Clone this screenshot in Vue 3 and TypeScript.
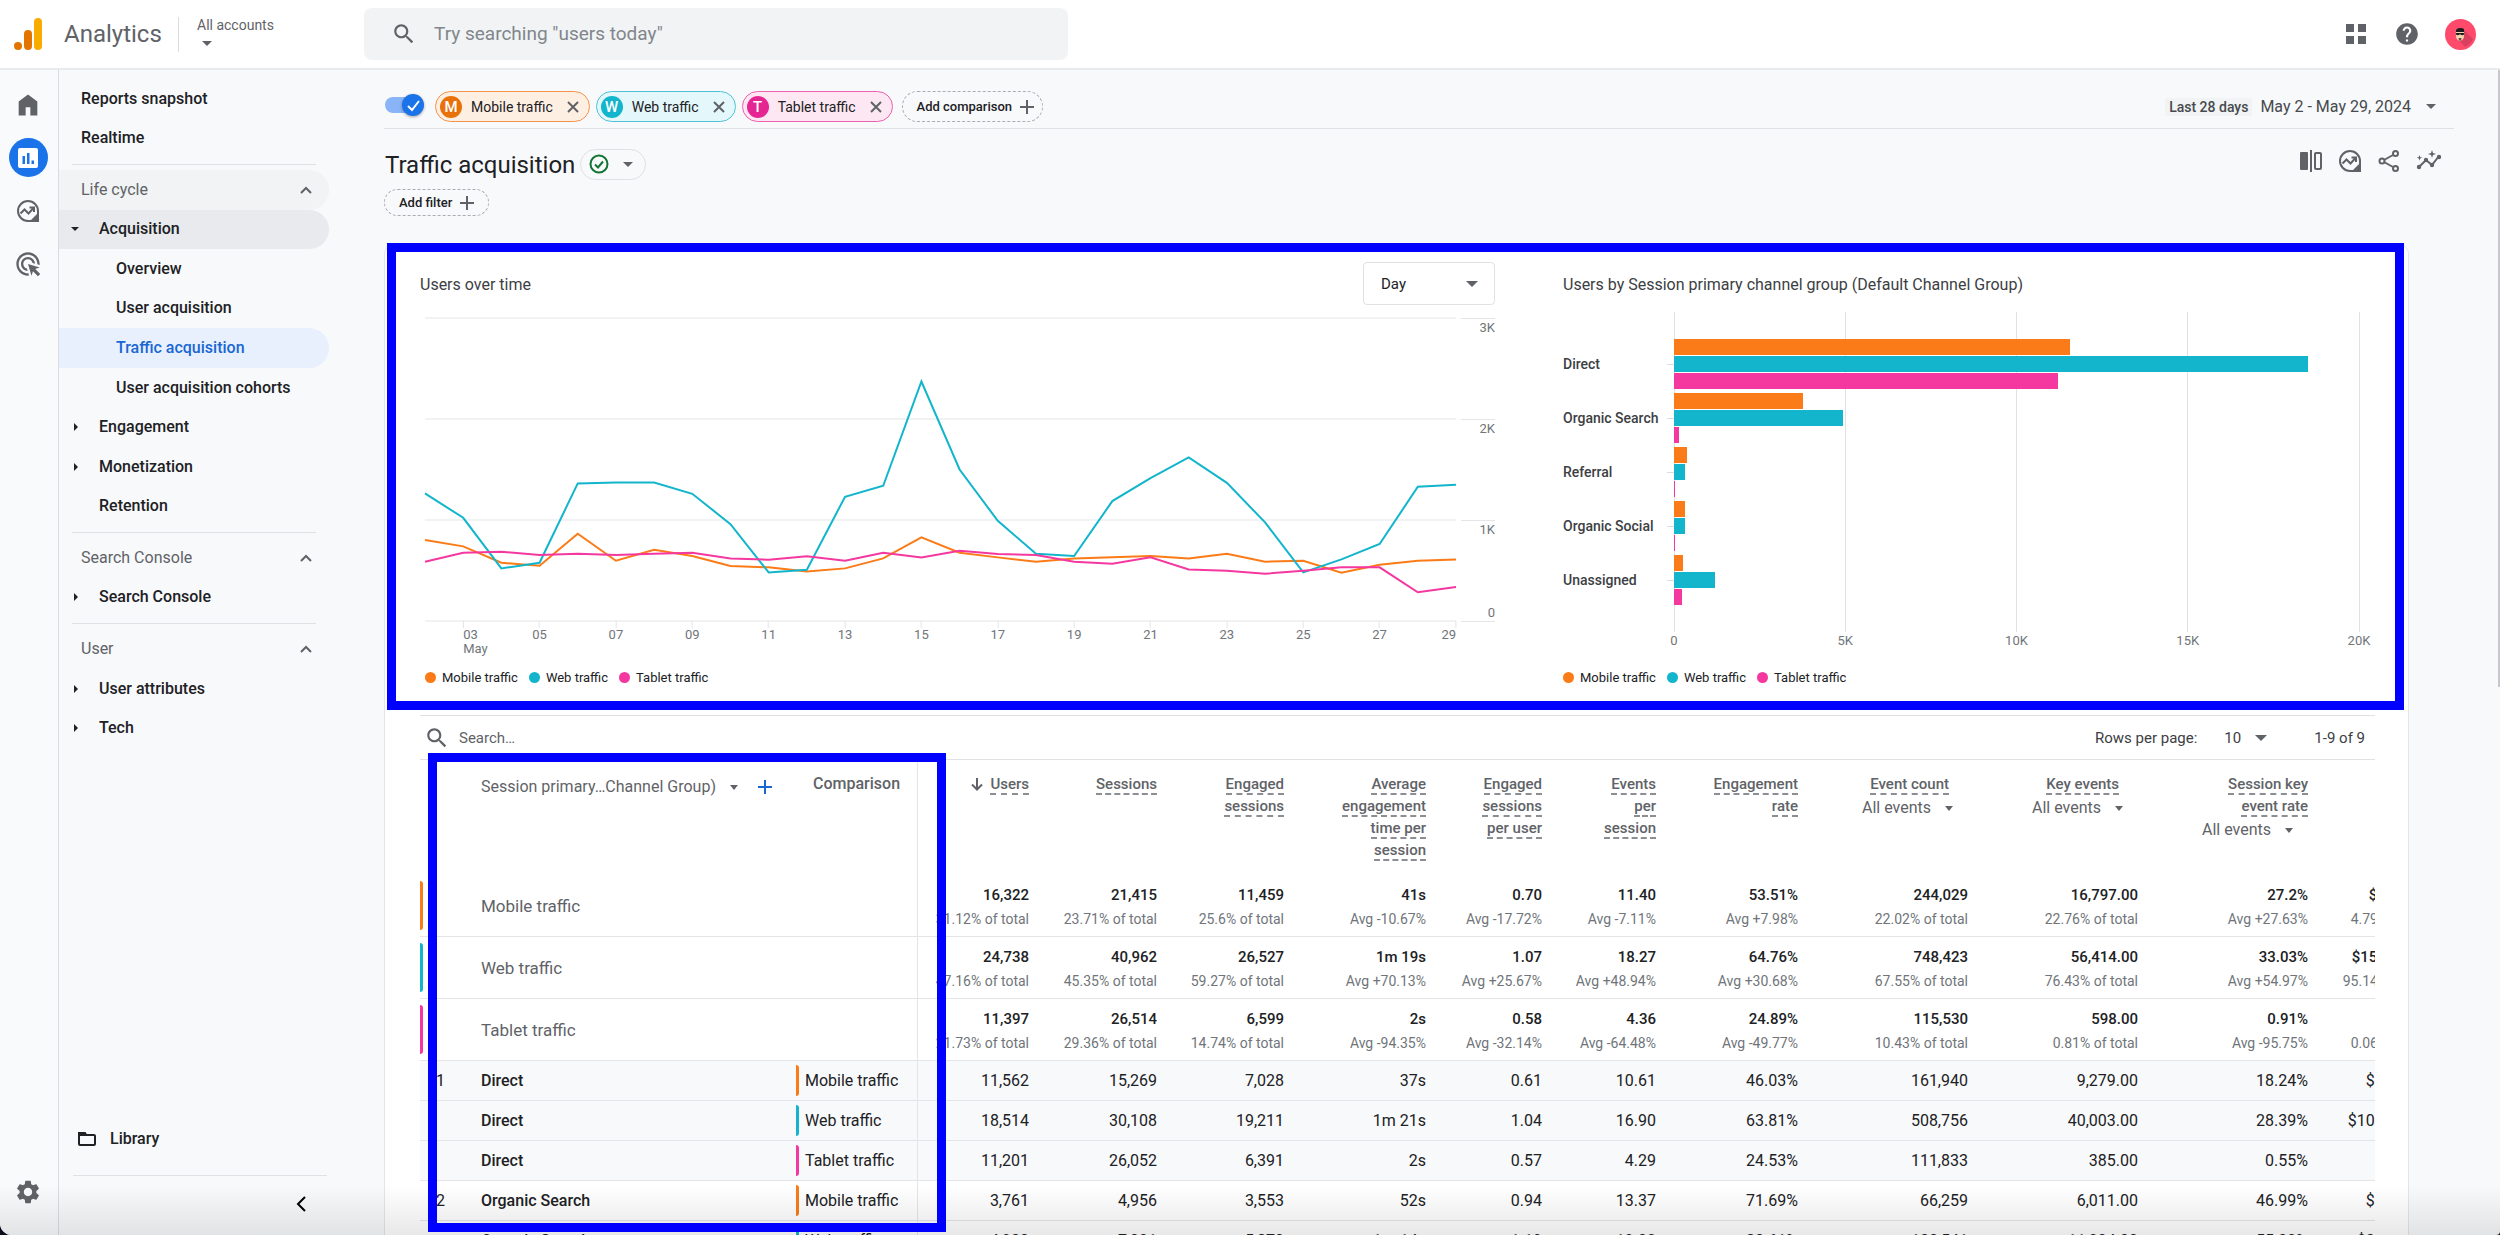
<script setup lang="ts">
import { ref } from 'vue'

type SegmentKey = 'mobile' | 'web' | 'tablet'

interface Segment {
  key: SegmentKey
  letter: string
  label: string
}

interface NavItem {
  label: string
  kind: 'top' | 'section' | 'group' | 'leaf' | 'plain'
  state?: 'open' | 'active'
}

interface Metric {
  lines: string[]
  filter?: boolean
  sorted?: boolean
}

const segments: Segment[] = [
  { key: 'mobile', letter: 'M', label: 'Mobile traffic' },
  { key: 'web', letter: 'W', label: 'Web traffic' },
  { key: 'tablet', letter: 'T', label: 'Tablet traffic' },
]

const navBlocks: NavItem[][] = [
  [
    { label: 'Reports snapshot', kind: 'top' },
    { label: 'Realtime', kind: 'top' },
  ],
  [
    { label: 'Life cycle', kind: 'section', state: 'open' },
    { label: 'Acquisition', kind: 'group', state: 'open' },
    { label: 'Overview', kind: 'leaf' },
    { label: 'User acquisition', kind: 'leaf' },
    { label: 'Traffic acquisition', kind: 'leaf', state: 'active' },
    { label: 'User acquisition cohorts', kind: 'leaf' },
    { label: 'Engagement', kind: 'group' },
    { label: 'Monetization', kind: 'group' },
    { label: 'Retention', kind: 'plain' },
  ],
  [
    { label: 'Search Console', kind: 'section' },
    { label: 'Search Console', kind: 'group' },
  ],
  [
    { label: 'User', kind: 'section' },
    { label: 'User attributes', kind: 'group' },
    { label: 'Tech', kind: 'group' },
  ],
]

const comparisonsOn = ref(true)
const granularity = ref('Day')
const rowsPerPage = ref('10')

const daily: Record<SegmentKey, number[]> = {
  mobile: [801, 739, 577, 547, 864, 597, 706, 643, 544, 531, 491, 521, 620, 828, 676, 630, 587, 620, 630, 643, 620, 666, 587, 597, 478, 557, 597, 610],
  web: [1263, 1022, 521, 577, 1362, 1372, 1372, 1259, 959, 481, 508, 1230, 1339, 2371, 1500, 992, 666, 643, 1187, 1414, 1619, 1368, 976, 481, 610, 762, 1329, 1349],
  tablet: [587, 676, 686, 653, 666, 653, 666, 676, 620, 607, 640, 597, 676, 630, 696, 663, 653, 587, 567, 630, 511, 498, 468, 498, 531, 531, 284, 336],
}
const points = (key: SegmentKey): string =>
  daily[key].map((v, i) => `${i},${3000 - v}`).join(' ')

const dayTicks = Array.from({ length: 14 }, (_, i) => ({
  index: i * 2 + 1,
  label: String(i * 2 + 3).padStart(2, '0'),
}))
const yTicks = ['3K', '2K', '1K']

const channelMax = 20000
const channels = [
  { name: 'Direct', values: [11562, 18514, 11201] },
  { name: 'Organic Search', values: [3761, 4930, 140] },
  { name: 'Referral', values: [380, 330, 20] },
  { name: 'Organic Social', values: [320, 320, 20] },
  { name: 'Unassigned', values: [250, 1210, 235] },
]
const channelTicks = [
  { at: 0, label: '0' },
  { at: 25, label: '5K' },
  { at: 50, label: '10K' },
  { at: 75, label: '15K' },
  { at: 100, label: '20K' },
]

const metrics: Metric[] = [
  { lines: ['Users'], sorted: true },
  { lines: ['Sessions'] },
  { lines: ['Engaged', 'sessions'] },
  { lines: ['Average', 'engagement', 'time per', 'session'] },
  { lines: ['Engaged', 'sessions', 'per user'] },
  { lines: ['Events', 'per', 'session'] },
  { lines: ['Engagement', 'rate'] },
  { lines: ['Event count'], filter: true },
  { lines: ['Key events'], filter: true },
  { lines: ['Session key', 'event rate'], filter: true },
]

const totals: { segment: Segment; cells: [string, string][] }[] = [
  {
    segment: segments[0],
    cells: [
      ['16,322', '31.12% of total'], ['21,415', '23.71% of total'], ['11,459', '25.6% of total'],
      ['41s', 'Avg -10.67%'], ['0.70', 'Avg -17.72%'], ['11.40', 'Avg -7.11%'], ['53.51%', 'Avg +7.98%'],
      ['244,029', '22.02% of total'], ['16,797.00', '22.76% of total'], ['27.2%', 'Avg +27.63%'],
      ['$7,664.20', '4.79% of total'],
    ],
  },
  {
    segment: segments[1],
    cells: [
      ['24,738', '47.16% of total'], ['40,962', '45.35% of total'], ['26,527', '59.27% of total'],
      ['1m 19s', 'Avg +70.13%'], ['1.07', 'Avg +25.67%'], ['18.27', 'Avg +48.94%'], ['64.76%', 'Avg +30.68%'],
      ['748,423', '67.55% of total'], ['56,414.00', '76.43% of total'], ['33.03%', 'Avg +54.97%'],
      ['$152,226.40', '95.14% of total'],
    ],
  },
  {
    segment: segments[2],
    cells: [
      ['11,397', '21.73% of total'], ['26,514', '29.36% of total'], ['6,599', '14.74% of total'],
      ['2s', 'Avg -94.35%'], ['0.58', 'Avg -32.14%'], ['4.36', 'Avg -64.48%'], ['24.89%', 'Avg -49.77%'],
      ['115,530', '10.43% of total'], ['598.00', '0.81% of total'], ['0.91%', 'Avg -95.75%'],
      ['$96.00', '0.06% of total'],
    ],
  },
]

const rows: { n: string; name: string; segment: Segment; shaded: boolean; cells: string[] }[] = [
  { n: '1', name: 'Direct', segment: segments[0], shaded: true, cells: ['11,562', '15,269', '7,028', '37s', '0.61', '10.61', '46.03%', '161,940', '9,279.00', '18.24%', '$5,120.40'] },
  { n: '', name: 'Direct', segment: segments[1], shaded: true, cells: ['18,514', '30,108', '19,211', '1m 21s', '1.04', '16.90', '63.81%', '508,756', '40,003.00', '28.39%', '$108,410.20'] },
  { n: '', name: 'Direct', segment: segments[2], shaded: true, cells: ['11,201', '26,052', '6,391', '2s', '0.57', '4.29', '24.53%', '111,833', '385.00', '0.55%', '$96.00'] },
  { n: '2', name: 'Organic Search', segment: segments[0], shaded: false, cells: ['3,761', '4,956', '3,553', '52s', '0.94', '13.37', '71.69%', '66,259', '6,011.00', '46.99%', '$2,310.10'] },
  { n: '', name: 'Organic Search', segment: segments[1], shaded: false, cells: ['4,930', '7,021', '5,870', '1m 14s', '1.19', '19.02', '83.61%', '133,541', '11,204.00', '55.02%', '$31,480.60'] },
]

const searchPath = 'M15.5 14h-.79l-.28-.27C15.41 12.59 16 11.11 16 9.5 16 5.91 13.09 3 9.5 3S3 5.91 3 9.5 5.91 16 9.5 16c1.61 0 3.09-.59 4.23-1.57l.27.28v.79l5 4.99L20.49 19l-4.99-5zm-6 0C7.01 14 5 11.99 5 9.5S7.01 5 9.5 5 14 7.01 14 9.5 11.99 14 9.5 14z'
</script>

<template>
  <div class="app">
    <header class="topbar">
      <a class="brand" href="#home" aria-label="Analytics home">
        <svg class="logo" viewBox="0 0 28 32" aria-hidden="true">
          <rect x="20" y="0" width="8" height="32" rx="4" fill="#f9ab00" />
          <rect x="10" y="12" width="8" height="20" rx="4" fill="#e37400" />
          <circle cx="4" cy="28" r="4" fill="#e37400" />
        </svg>
        <span class="brand-name">Analytics</span>
      </a>
      <button class="account" type="button">
        <span>All accounts</span>
        <span class="caret"></span>
      </button>
      <label class="searchbox">
        <svg viewBox="0 0 24 24" aria-hidden="true"><path :d="searchPath" /></svg>
        <input type="search" placeholder='Try searching "users today"' aria-label="Search analytics" />
      </label>
      <div class="top-actions">
        <button type="button" class="icon-button" aria-label="Apps">
          <svg class="s26" viewBox="0 0 26 26" fill="#474747"><path d="M3 3h8v8H3zM15 3h8v8h-8zM3 15h8v8H3zM15 15h8v8h-8z" /></svg>
        </button>
        <button type="button" class="icon-button" aria-label="Help">
          <svg class="s26" viewBox="0 0 24 24" fill="#5f6368"><path d="M12 2C6.48 2 2 6.48 2 12s4.48 10 10 10 10-4.48 10-10S17.52 2 12 2zm1 17h-2v-2h2v2zm2.07-7.75l-.9.92C13.45 12.9 13 13.5 13 15h-2v-.5c0-1.1.45-2.1 1.17-2.83l1.24-1.26c.37-.36.59-.86.59-1.41 0-1.1-.9-2-2-2s-2 .9-2 2H8c0-2.21 1.79-4 4-4s4 1.79 4 4c0 .88-.36 1.68-.93 2.25z" /></svg>
        </button>
        <button type="button" class="icon-button" aria-label="Account">
          <svg class="s31" viewBox="0 0 31 31">
            <circle cx="15.500" cy="15.500" r="15.500" fill="#ff4a6c" />
            <path d="M19 11l9 9q-3 6-8 8l-7-8z" fill="#d9405e" />
            <path d="M11 12h8v5q0 4-4 5-4-1-4-5z" fill="#f6d3b3" />
            <path d="M11 13v-2q1-2 4-2t4 1v3z" fill="#1c1c1c" />
            <path d="M11 14h8v1.500q-1 1-3 .5l-1-1-1 1q-2 .5-3-.5z" fill="#1c1c1c" />
            <path d="M13.500 19h3l-.5 2.500h-2z" fill="#6b4a3a" />
          </svg>
        </button>
      </div>
    </header>

    <div class="body">
      <nav class="rail" aria-label="Product areas">
        <button type="button" class="icon-button rail-item" aria-label="Home">
          <svg class="s28" viewBox="0 0 24 24"><path d="M4 21V9l8-6 8 6v12h-6v-7h-4v7z" /></svg>
        </button>
        <button type="button" class="icon-button rail-item rail-active" aria-label="Reports">
          <svg class="s28" viewBox="0 0 28 28"><rect x="4" y="4" width="20" height="20" rx="2" fill="#fff" /><path d="M8.500 12h2.500v8H8.500zM13 9h2.500v11H13zM17.500 16.500H20V20h-2.500z" fill="#1a73e8" /></svg>
        </button>
        <button type="button" class="icon-button rail-item" aria-label="Explore">
          <svg class="s28 line" viewBox="0 0 28 28"><path d="M14 4a10 10 0 1 0 0 20h10V14A10 10 0 0 0 14 4z" /><path d="M6.500 16.500l4-4 4 4 5-5.500M15.500 10.500h4.500v4.500" /><path d="M19 22.500l3.500-3.500v3.500z" fill="#5f6368" /></svg>
        </button>
        <button type="button" class="icon-button rail-item" aria-label="Advertising">
          <svg class="s28" viewBox="0 0 24 24"><path d="M11.710 17.990C8.530 17.840 6 15.220 6 12c0-3.310 2.690-6 6-6 3.220 0 5.840 2.530 5.990 5.710l-2.100-.630C15.480 9.310 13.890 8 12 8c-2.210 0-4 1.790-4 4 0 1.890 1.310 3.480 3.080 3.890l.630 2.100zM22 12c0 .300-.010.600-.040.900l-1.970-.590C20 12.210 20 12.100 20 12c0-4.420-3.580-8-8-8s-8 3.580-8 8 3.580 8 8 8c.100 0 .210 0 .310-.010l.590 1.970c-.300.030-.600.040-.900.040-5.520 0-10-4.480-10-10S6.480 2 12 2s10 4.480 10 10zm-3.770 4.260L22 15l-10-3 3 10 1.260-3.770 4.270 4.270 1.980-1.980-4.280-4.260z" /></svg>
        </button>
        <button type="button" class="icon-button rail-item rail-admin" aria-label="Admin">
          <svg class="s28" viewBox="0 0 24 24"><path d="M19.140 12.940c.04-.3.06-.61.06-.94 0-.32-.02-.64-.07-.94l2.030-1.580c.18-.14.23-.41.12-.61l-1.920-3.320c-.12-.22-.37-.29-.59-.22l-2.390.96c-.5-.38-1.030-.7-1.620-.94L14.400 2.810c-.04-.24-.24-.41-.48-.41h-3.840c-.24 0-.43.17-.47.41L9.250 5.350C8.660 5.590 8.120 5.920 7.630 6.290L5.240 5.330c-.22-.08-.47 0-.59.22L2.740 8.870c-.12.21-.08.47.12.61l2.030 1.580C4.840 11.360 4.800 11.690 4.800 12s.02.64.07.94l-2.030 1.580c-.18.14-.23.41-.12.61l1.920 3.320c.12.22.37.29.59.22l2.390-.96c.5.38 1.030.7 1.620.94l.36 2.540c.05.24.24.41.48.41h3.840c.24 0 .44-.17.47-.41l.36-2.540c.59-.24 1.130-.56 1.620-.94l2.390.96c.22.08.47 0 .59-.22l1.920-3.320c.12-.22.07-.47-.12-.61l-2.010-1.580zM12 15.600c-1.980 0-3.600-1.620-3.600-3.600s1.620-3.600 3.600-3.600 3.600 1.620 3.600 3.600-1.620 3.600-3.600 3.600z" /></svg>
        </button>
      </nav>

      <nav class="sidebar" aria-label="Reports">
        <template v-for="(block, b) in navBlocks" :key="b">
          <hr v-if="b > 0" class="nav-rule" />
          <ul class="nav-block" :class="`nav-block-${b}`">
            <li v-for="(item, i) in block" :key="i" :class="['nav-item', item.kind, item.state]">
              <a href="#report">
                <span v-if="item.kind === 'group'" class="nav-caret"></span>
                <span class="nav-label">{{ item.label }}</span>
                <svg v-if="item.kind === 'section'" class="nav-chevron" viewBox="0 0 12 8" aria-hidden="true"><path d="M1 7l5-5 5 5" /></svg>
              </a>
            </li>
          </ul>
        </template>
        <div class="nav-foot">
          <a class="library" href="#library">
            <svg viewBox="0 0 18 14" aria-hidden="true"><path d="M1 12V2q0-1 1-1h4l2 2h8q1 0 1 1v8q0 1-1 1H2q-1 0-1-1z" /><path d="M1 1h6l1 2H1z" fill="#202124" /></svg>
            <span>Library</span>
          </a>
          <hr />
          <button type="button" class="icon-button collapse" aria-label="Collapse navigation">
            <svg viewBox="0 0 10 16"><path d="M9 1L2 8l7 7" /></svg>
          </button>
        </div>
      </nav>

      <main class="main">
        <section class="compare-bar">
          <input v-model="comparisonsOn" class="toggle" type="checkbox" aria-label="Comparisons" />
          <ul class="chips">
            <li v-for="s in segments" :key="s.key" :class="['chip', s.key]">
              <span class="chip-letter">{{ s.letter }}</span>
              <span>{{ s.label }}</span>
              <button type="button" class="icon-button" :aria-label="`Remove ${s.label}`">
                <svg class="s12" viewBox="0 0 12 12"><path d="M1 1l10 10M11 1L1 11" /></svg>
              </button>
            </li>
          </ul>
          <button type="button" class="dashed add-comparison">
            <span>Add comparison</span>
            <svg class="s14" viewBox="0 0 14 14" aria-hidden="true"><path d="M7 0v14M0 7h14" /></svg>
          </button>
          <button type="button" class="date-range">
            <span class="preset">Last 28 days</span>
            <span>May 2 - May 29, 2024</span>
            <span class="caret"></span>
          </button>
        </section>

        <section class="title-bar">
          <h1>Traffic acquisition</h1>
          <button type="button" class="status" aria-label="Data quality">
            <svg class="s20" viewBox="0 0 20 20"><circle cx="10" cy="10" r="8.500" /><path d="M6 10.500l3 3 5-6" /></svg>
            <span class="caret"></span>
          </button>
          <div class="report-actions">
            <button type="button" class="icon-button" aria-label="Compare">
              <svg class="s24" viewBox="0 0 24 24"><rect x="1" y="3" width="8" height="18" rx="1" fill="#5f6368" /><path d="M12 1v22" class="stroke" /><rect x="16" y="4" width="6" height="16" rx="1" class="stroke" /></svg>
            </button>
            <button type="button" class="icon-button" aria-label="Explore this report">
              <svg class="s24 line" viewBox="0 0 24 24"><path d="M12 2a10 10 0 1 0 0 20h10V12A10 10 0 0 0 12 2z" /><path d="M4.500 14.500l4-4 4 4 5-5.500M13.500 8.500H18V13" /><path d="M17 20.500l3.500-3.500v3.500z" fill="#5f6368" /></svg>
            </button>
            <button type="button" class="icon-button" aria-label="Share">
              <svg class="s24 line" viewBox="0 0 24 24"><path d="M7 11l9-5M7 13l9 5" /><circle cx="5" cy="12" r="2.500" /><circle cx="18.500" cy="4.500" r="2.500" /><circle cx="18.500" cy="19.500" r="2.500" /></svg>
            </button>
            <button type="button" class="icon-button" aria-label="Insights">
              <svg class="s26" viewBox="0 0 26 24"><path d="M3 18l7-7 6 5 7-9" class="stroke" /><circle cx="3" cy="18" r="2.200" /><circle cx="10" cy="11" r="2.200" /><circle cx="16" cy="16" r="2.200" /><circle cx="23" cy="8" r="2.200" /><path d="M16 1l1 3 3 1-3 1-1 3-1-3-3-1 3-1zM3.500 6l.7 2 2 .7-2 .7-.7 2-.7-2-2-.7 2-.7z" /></svg>
            </button>
          </div>
        </section>
        <button type="button" class="dashed add-filter">
          <span>Add filter</span>
          <svg class="s14" viewBox="0 0 14 14" aria-hidden="true"><path d="M7 0v14M0 7h14" /></svg>
        </button>

        <article class="card">
          <section class="charts">
            <div class="panel">
              <div class="panel-head">
                <h2>Users over time</h2>
                <label class="select-wrap granularity">
                  <select v-model="granularity" aria-label="Granularity">
                    <option>Day</option>
                    <option>Week</option>
                    <option>Month</option>
                  </select>
                  <span class="caret big"></span>
                </label>
              </div>
              <div class="line-chart">
                <div class="line-plot">
                  <svg viewBox="0 0 27 3000" preserveAspectRatio="none" role="img" aria-label="Users over time">
                    <path class="grid" d="M0 0H27M0 1000H27M0 2000H27M0 3000H27" />
                    <polyline v-for="s in segments" :key="s.key" :class="s.key" :points="points(s.key)" />
                  </svg>
                  <div class="x-axis">
                    <span v-for="t in dayTicks" :key="t.label" class="x-tick" :style="{ left: (t.index / 27) * 100 + '%' }">
                      <span>{{ t.label }}</span>
                      <span v-if="t.label === '03'">May</span>
                    </span>
                  </div>
                </div>
                <div class="y-axis">
                  <span v-for="y in yTicks" :key="y">{{ y }}</span>
                  <span class="zero">0</span>
                </div>
              </div>
              <ul class="legend indented">
                <li v-for="s in segments" :key="s.key" :class="s.key">{{ s.label }}</li>
              </ul>
            </div>

            <div class="panel">
              <div class="panel-head">
                <h2>Users by Session primary channel group (Default Channel Group)</h2>
              </div>
              <div class="bar-chart">
                <div class="bar-grid">
                  <span v-for="t in channelTicks" :key="t.at" class="bar-tick" :style="{ left: t.at + '%' }"><span>{{ t.label }}</span></span>
                </div>
                <div v-for="c in channels" :key="c.name" class="channel">
                  <span class="channel-name">{{ c.name }}</span>
                  <span class="notch"></span>
                  <div class="bars">
                    <div v-for="(v, i) in c.values" :key="i" :class="['bar', segments[i].key]" :style="{ width: (v / channelMax) * 100 + '%' }"></div>
                  </div>
                </div>
              </div>
              <ul class="legend">
                <li v-for="s in segments" :key="s.key" :class="s.key">{{ s.label }}</li>
              </ul>
            </div>
            <div class="highlight highlight-charts"></div>
          </section>

          <section class="table-area">
            <div class="table-tools">
              <label class="table-search">
                <svg viewBox="0 0 24 24" aria-hidden="true"><path :d="searchPath" /></svg>
                <input type="text" placeholder="Search…" aria-label="Search rows" />
              </label>
              <label class="rows-label" for="rows-per-page">Rows per page:</label>
              <span class="select-wrap paging">
                <select id="rows-per-page" v-model="rowsPerPage">
                  <option>10</option>
                  <option>25</option>
                </select>
                <span class="caret big"></span>
              </span>
              <span class="range">1-9 of 9</span>
            </div>

            <div class="table-clip">
              <table>
                <colgroup>
                  <col class="c-index" />
                  <col />
                  <col class="c-comparison" />
                  <col class="c-users" />
                  <col class="c-sessions" />
                  <col class="c-engaged" />
                  <col class="c-time" />
                  <col class="c-peruser" />
                  <col class="c-events" />
                  <col class="c-rate" />
                  <col class="c-wide" />
                  <col class="c-wide" />
                  <col class="c-wide" />
                  <col class="c-revenue" />
                </colgroup>
                <thead>
                  <tr>
                    <td></td>
                    <th scope="col" class="dimension">
                      <div>
                        <button type="button">Session primary…Channel Group) <span class="caret small"></span></button>
                        <button type="button" class="icon-button plus" aria-label="Add dimension">
                          <svg class="s14" viewBox="0 0 14 14"><path d="M7 0v14M0 7h14" /></svg>
                        </button>
                      </div>
                    </th>
                    <th scope="col" class="comparison">Comparison</th>
                    <th v-for="(m, i) in metrics" :key="i" scope="col" class="metric" :class="{ inset: m.filter && m.lines.length === 1 }">
                      <div v-for="(l, j) in m.lines" :key="j" class="metric-line">
                        <svg v-if="m.sorted" class="s14 sort" viewBox="0 0 14 14" aria-hidden="true"><path d="M7 1v11M2 7.500L7 12.500l5-5" /></svg>
                        <span>{{ l }}</span>
                      </div>
                      <button v-if="m.filter" type="button">All events <span class="caret small"></span></button>
                    </th>
                    <td></td>
                  </tr>
                </thead>
                <tbody>
                  <tr v-for="t in totals" :key="t.segment.key" class="total">
                    <td><span :class="['mark', t.segment.key]"></span></td>
                    <th scope="row">{{ t.segment.label }}</th>
                    <td class="frozen"></td>
                    <td v-for="(c, i) in t.cells" :key="i" class="num">
                      <strong>{{ c[0] }}</strong>
                      <small>{{ c[1] }}</small>
                    </td>
                  </tr>
                  <tr v-for="(r, k) in rows" :key="k" :class="['data', { shaded: r.shaded }]">
                    <td class="index">{{ r.n }}</td>
                    <th scope="row">{{ r.name }}</th>
                    <td class="frozen"><div><span :class="['mark', r.segment.key]"></span>{{ r.segment.label }}</div></td>
                    <td v-for="(c, i) in r.cells" :key="i" class="num">{{ c }}</td>
                  </tr>
                </tbody>
              </table>
            </div>
            <div class="highlight highlight-table"></div>
          </section>
        </article>
        <div class="scroll-thumb"></div>
      </main>
    </div>
    <div class="bottom-fade"></div>
  </div>
</template>

<style>
body {
  margin: 0;
  background: #0b0d1c;
}
</style>

<style scoped>
.app {
  --mobile: #fa7b17;
  --web: #12b5cb;
  --tablet: #f538a0;
  --ink: #202124;
  --grey: #5f6368;
  --line: #e3e5e8;
  position: relative;
  display: flex;
  flex-direction: column;
  height: 100vh;
  overflow: hidden;
  border-radius: 0 0 4px 12px;
  background: #f8f9fb;
  color: var(--ink);
  font: 400 16px/20px Roboto, "Open Sans", sans-serif;
}
* {
  box-sizing: border-box;
}
button,
input,
select {
  font: inherit;
  color: inherit;
}
button {
  padding: 0;
  border: 0;
  background: none;
  cursor: pointer;
}
a {
  color: inherit;
  text-decoration: none;
}
ul {
  margin: 0;
  padding: 0;
  list-style: none;
}
h1,
h2 {
  margin: 0;
  font-weight: 400;
}
hr {
  margin: 0;
  border: 0;
  border-top: 1px solid #dfe1e5;
}
svg {
  display: block;
  flex: none;
  fill: var(--grey);
}
.icon-button {
  display: flex;
  align-items: center;
  justify-content: center;
}
.s12 { width: 12px; height: 12px; }
.s14 { width: 14px; height: 14px; }
.s20 { width: 20px; height: 20px; }
.s24 { width: 24px; height: 24px; }
.s26 { width: 26px; height: 26px; }
.s28 { width: 28px; height: 28px; }
.s31 { width: 31px; height: 31px; }
.line,
.stroke {
  fill: none;
  stroke: var(--grey);
  stroke-width: 2;
}
.caret {
  flex: none;
  width: 0;
  height: 0;
  border: 5px solid transparent;
  border-top-color: var(--grey);
  border-bottom: 0;
}
.caret.small {
  border-width: 4px;
  border-top-width: 5px;
  border-bottom: 0;
}
.caret.big {
  border-width: 6px;
  border-bottom: 0;
}

/* Top bar */
.topbar {
  display: flex;
  align-items: center;
  flex: none;
  height: 70px;
  padding: 0 24px 0 14px;
  border-bottom: 2px solid #e8eaed;
  background: #fff;
}
.brand {
  display: flex;
  align-items: center;
  gap: 22px;
  width: 164px;
}
.logo {
  width: 28px;
  height: 32px;
}
.brand-name {
  font-size: 24px;
  line-height: 32px;
  color: var(--grey);
}
.account {
  display: flex;
  flex-direction: column;
  align-items: flex-start;
  justify-content: flex-start;
  gap: 8px;
  width: 186px;
  height: 35px;
  padding: 0 0 0 18px;
  border-left: 1px solid #dadce0;
  font-size: 14px;
  line-height: 16px;
  color: var(--grey);
}
.account .caret {
  margin-left: 5px;
}
.searchbox {
  display: flex;
  align-items: center;
  gap: 17px;
  flex: 0 1 704px;
  height: 52px;
  padding: 0 27px;
  border-radius: 8px;
  background: #f1f3f4;
}
.searchbox svg {
  width: 26px;
  height: 26px;
}
.searchbox input {
  flex: 1;
  min-width: 0;
  padding: 0;
  border: 0;
  outline: 0;
  background: none;
  font-size: 19px;
}
.searchbox input::placeholder {
  color: #80868b;
  opacity: 1;
}
.top-actions {
  display: flex;
  align-items: center;
  gap: 25px;
  margin-left: auto;
}

/* Rail */
.body {
  display: flex;
  flex: 1;
  min-height: 0;
}
.rail {
  display: flex;
  flex-direction: column;
  align-items: center;
  flex: none;
  width: 59px;
  padding: 15px 2px 24px 0;
  border-right: 1px solid #dadce0;
  background: #f9fafc;
}
.rail-item {
  width: 39px;
  height: 39px;
  margin-bottom: 14px;
}
.rail-active {
  border-radius: 50%;
  background: #1a73e8;
}
.rail-admin {
  margin: auto 0 0;
}

/* Sidebar */
.sidebar {
  display: flex;
  flex-direction: column;
  flex: none;
  width: 325px;
  padding-top: 9px;
  font-weight: 500;
}
.nav-block {
  display: flex;
  flex-direction: column;
  margin-right: 55px;
}
.nav-block-0 { height: 79px; }
.nav-block-1 { height: 356px; }
.nav-block-2 { height: 79px; }
.nav-block-3 { height: 119px; }
.nav-item {
  display: flex;
  flex: 1;
  border-radius: 0 20px 20px 0;
}
.nav-item a {
  display: flex;
  align-items: center;
  flex: 1;
  padding: 0 17px 0 22px;
}
.nav-item.section {
  font-weight: 400;
  color: var(--grey);
}
.nav-item.section.open {
  background: #f1f3f4;
}
.nav-item.group.open {
  background: #e8eaed;
}
.nav-item.group a {
  padding-left: 14px;
}
.nav-item.plain a {
  padding-left: 40px;
}
.nav-item.leaf a {
  padding-left: 57px;
}
.nav-item.active {
  background: #e8f0fe;
  color: #1967d2;
}
.nav-caret {
  width: 26px;
}
.nav-caret::before {
  content: "";
  display: block;
  width: 0;
  margin-left: 1px;
  border: 4px solid transparent;
  border-left-color: var(--ink);
  border-right: 0;
}
.nav-item.open .nav-caret::before {
  margin-left: -2px;
  border: 4px solid transparent;
  border-top-color: var(--ink);
  border-bottom: 0;
}
.nav-chevron {
  width: 12px;
  height: 8px;
  margin-left: auto;
  fill: none;
  stroke: var(--grey);
  stroke-width: 2;
}
.nav-rule {
  margin: 6px 68px 5px 13px;
}
.nav-foot {
  margin: auto 57px 23px 14px;
}
.library {
  display: flex;
  align-items: center;
  gap: 14px;
  padding: 0 0 26px 5px;
}
.library svg {
  width: 18px;
  height: 14px;
  fill: none;
  stroke: var(--ink);
  stroke-width: 2;
}
.collapse {
  margin: 20px 21px 0 auto;
}
.collapse svg {
  width: 10px;
  height: 16px;
  fill: none;
  stroke: #000;
  stroke-width: 2;
}

/* Main column */
.main {
  position: relative;
  flex: 1;
  min-width: 0;
  padding: 0 46px 0 0;
  overflow: hidden;
}
.compare-bar {
  display: flex;
  align-items: center;
  padding: 21px 16px 6px 0;
  border-bottom: 1px solid #dfe1e5;
}
.toggle {
  appearance: none;
  display: flex;
  align-items: center;
  width: 37px;
  height: 16px;
  margin: 0 13px 3px 1px;
  border-radius: 8px;
  background: #8ab4f8;
}
.toggle::before {
  content: "";
  width: 22px;
  height: 22px;
  margin-left: 17px;
  border-radius: 50%;
  background: #1a73e8 url("data:image/svg+xml,%3Csvg xmlns='http://www.w3.org/2000/svg' viewBox='0 0 22 22'%3E%3Cpath d='M6 12l4 4 7-9' fill='none' stroke='white' stroke-width='2'/%3E%3C/svg%3E");
  box-shadow: 0 1px 3px rgba(0, 0, 0, 0.35);
  flex: none;
}
.chips {
  display: flex;
  gap: 6px;
}
.chip {
  display: flex;
  align-items: center;
  height: 31px;
  padding: 0 10px 0 4px;
  border: 1px solid;
  border-radius: 16px;
  font-size: 14px;
}
.chip.mobile { border-color: #f5924a; background: #feefe3; }
.chip.web { border-color: #4fc3d5; background: #e4f7fb; }
.chip.tablet { border-color: #ee5fb0; background: #fde7f3; }
.chip-letter {
  width: 22px;
  height: 22px;
  margin-right: 9px;
  border-radius: 50%;
  font-size: 15px;
  font-weight: 500;
  line-height: 22px;
  text-align: center;
  color: #fff;
}
.mobile .chip-letter { background: #e8710a; }
.web .chip-letter { background: #12b5cb; }
.tablet .chip-letter { background: #e52592; }
.chip .icon-button {
  margin-left: 14px;
}
.chip svg,
.dashed svg {
  stroke: var(--grey);
  stroke-width: 2;
}
.dashed {
  display: flex;
  align-items: center;
  gap: 8px;
  border: 1px dashed #a9adb2;
  border-radius: 16px;
  font-size: 13px;
  font-weight: 500;
}
.add-comparison {
  height: 31px;
  margin-left: 9px;
  padding: 0 8px 0 14px;
}
.add-filter {
  height: 27px;
  margin: 9px 0 28px;
  padding: 0 14px 0 14px;
}
.date-range {
  display: flex;
  align-items: center;
  gap: 8px;
  margin-left: auto;
  padding-right: 2px;
  color: #474a4e;
}
.date-range .caret {
  margin-left: 7px;
}
.preset {
  padding: 0 4px;
  border-radius: 2px;
  background: #f1f3f4;
  font-size: 14px;
  font-weight: 500;
  line-height: 18px;
}
.title-bar {
  display: flex;
  align-items: center;
  gap: 5px;
  padding: 19px 12px 0 0;
}
h1 {
  padding: 2px 0 0 1px;
  font-size: 24px;
  line-height: 30px;
}
.status {
  display: flex;
  align-items: center;
  gap: 14px;
  height: 31px;
  padding: 0 12px 0 8px;
  border: 1px solid #dfe1e5;
  border-radius: 16px;
}
.status svg {
  fill: none;
  stroke: #137333;
  stroke-width: 2;
}
.report-actions {
  display: flex;
  align-items: center;
  gap: 15px;
  height: 24px;
  margin: 0 0 7px auto;
}

/* Card */
.card {
  margin-right: 45px;
  border: 1px solid var(--line);
  border-radius: 10px;
  background: #fff;
}
.charts {
  position: relative;
  display: grid;
  grid-template-columns: 1075fr 812fr;
  gap: 68px;
  padding: 17px 33px 29px 35px;
}
.panel {
  min-width: 0;
}
.panel-head {
  display: flex;
  align-items: center;
  justify-content: space-between;
  height: 43px;
}
h2 {
  padding-top: 2px;
  font-size: 16px;
  line-height: 20px;
  color: #3c4043;
}
.select-wrap {
  display: flex;
  align-items: center;
}
.select-wrap select {
  appearance: none;
  padding: 0;
  border: 0;
  outline: 0;
  background: none;
  font-size: 15px;
}
.select-wrap .caret {
  pointer-events: none;
}
.granularity {
  justify-content: space-between;
  width: 132px;
  height: 43px;
  padding: 0 16px 0 17px;
  border: 1px solid #dfe1e5;
  border-radius: 4px;
}
.granularity select {
  width: 60px;
}
.line-chart {
  display: flex;
  gap: 5px;
  margin-top: 13px;
  padding-left: 5px;
  font-size: 13px;
  line-height: 15px;
  color: #70757a;
}
.line-plot {
  flex: 1;
  min-width: 0;
}
.line-plot > svg {
  width: 100%;
  height: 303px;
  overflow: visible;
}
.line-plot path,
.line-plot polyline {
  fill: none;
  vector-effect: non-scaling-stroke;
}
.grid { stroke: #e3e5e8; stroke-width: 1; }
.line-plot polyline { stroke-width: 2; }
polyline.mobile { stroke: var(--mobile); }
polyline.web { stroke: var(--web); }
polyline.tablet { stroke: var(--tablet); }
.x-axis {
  position: relative;
  height: 48px;
}
.x-tick {
  position: absolute;
  display: flex;
  flex-direction: column;
  line-height: 14px;
  transform: translateX(-50%);
}
.x-tick::before {
  content: "";
  align-self: center;
  width: 1px;
  height: 7px;
  background: var(--line);
}
.x-tick:first-child {
  transform: none;
}
.x-tick:first-child::before {
  align-self: flex-start;
}
.x-tick:last-child {
  transform: translateX(-100%);
}
.x-tick:last-child::before {
  align-self: flex-end;
}
.y-axis {
  display: flex;
  flex-direction: column;
  width: 34px;
  height: 304px;
  border-bottom: 1px solid var(--line);
  text-align: right;
}
.y-axis span {
  flex: none;
  height: 101px;
  padding-top: 1px;
  border-top: 1px solid var(--line);
}
.y-axis .zero {
  height: 0;
  margin-top: -16px;
  padding: 0;
  border: 0;
}
.legend {
  display: flex;
  gap: 11px;
  font-size: 13px;
  line-height: 17px;
}
.legend.indented {
  padding-left: 5px;
}
.legend li {
  display: flex;
  align-items: center;
  gap: 6px;
}
.legend li::before {
  content: "";
  width: 11px;
  height: 11px;
  border-radius: 50%;
  background: var(--mobile);
}
.legend li.web::before { background: var(--web); }
.legend li.tablet::before { background: var(--tablet); }
.bar-chart {
  position: relative;
  height: 320px;
  margin: 7px 0 37px;
  padding-top: 25px;
}
.bar-grid {
  position: absolute;
  inset: 0 16px 0 111px;
}
.bar-tick {
  position: absolute;
  top: 0;
  bottom: 0;
  display: flex;
  flex-direction: column;
  align-items: center;
  width: 40px;
  margin-left: -20px;
  font-size: 13px;
  line-height: 18px;
  color: #70757a;
}
.bar-tick::before {
  content: "";
  flex: none;
  width: 1px;
  height: 320px;
  background: #dfe1e5;
}
.channel {
  position: relative;
  display: flex;
  align-items: center;
  height: 54px;
  padding-right: 16px;
}
.channel-name {
  width: 104px;
  font-size: 14px;
  font-weight: 500;
  color: #3c4043;
}
.notch {
  width: 7px;
  height: 1px;
  background: #dadce0;
}
.bars {
  display: flex;
  flex-direction: column;
  gap: 1px;
  flex: 1;
}
.bar { height: 16px; }
.bar.mobile { background: var(--mobile); }
.bar.web { background: var(--web); }
.bar.tablet { background: var(--tablet); }
.highlight {
  position: absolute;
  z-index: 3;
  border: 9px solid #0000fe;
  pointer-events: none;
}
.highlight-charts {
  inset: -2px 4px 5px 2px;
}
.highlight-table {
  top: 37px;
  left: 8px;
  width: 518px;
  height: 479px;
}

/* Table */
.table-area {
  position: relative;
  margin: 0 33px 0 35px;
  border-top: 1px solid #dfe1e5;
}
.table-tools {
  display: flex;
  align-items: center;
  height: 43px;
  font-size: 15px;
  color: #3c4043;
}
.table-search {
  display: flex;
  align-items: center;
  gap: 9px;
  flex: 1;
  padding-left: 4px;
}
.table-search svg {
  width: 26px;
  height: 26px;
}
.table-search input {
  flex: 1;
  min-width: 0;
  padding: 0;
  border: 0;
  outline: 0;
  background: none;
}
.table-search input::placeholder {
  color: var(--grey);
  opacity: 1;
}
.paging {
  gap: 14px;
  margin: 0 47px 0 27px;
}
.range {
  padding-right: 10px;
}
.table-clip {
  overflow: hidden;
  border-top: 1px solid #dfe1e5;
}
table {
  width: calc(100% + 61px);
  border-collapse: separate;
  border-spacing: 0;
  table-layout: fixed;
}
th,
td {
  padding: 0;
  text-align: left;
  white-space: nowrap;
}
.c-index { width: 61px; }
.c-comparison { width: 122px; }
.c-users { width: 111px; }
.c-sessions { width: 128px; }
.c-engaged { width: 127px; }
.c-time { width: 142px; }
.c-peruser { width: 116px; }
.c-events { width: 114px; }
.c-rate { width: 142px; }
.c-wide { width: 170px; }
.c-revenue { width: 128px; }
thead tr {
  height: 115px;
}
thead th {
  padding-top: 13px;
  vertical-align: top;
  font-weight: 500;
  line-height: 22px;
  color: var(--grey);
}
.dimension div {
  display: flex;
  align-items: center;
  height: 28px;
}
.dimension button:first-child,
.metric button {
  display: inline-flex;
  align-items: center;
  gap: 14px;
  font-weight: 400;
}
.plus {
  margin-left: 20px;
}
.plus svg {
  stroke: #1967d2;
  stroke-width: 2;
}
.comparison {
  padding-left: 17px;
  border-right: 1px solid var(--line);
}
.metric {
  text-align: right;
  font-size: 15px;
}
.metric-line {
  display: flex;
  justify-content: flex-end;
  align-items: center;
  gap: 6px;
  height: 22px;
}
.metric-line span {
  height: 22px;
  border-bottom: 2px dashed #8b8f94;
}
.inset .metric-line {
  padding-right: 19px;
}
.metric button {
  margin: 2px 15px 0 0;
  font-size: 16px;
}
.sort {
  fill: none;
  stroke: var(--grey);
  stroke-width: 2;
}
tbody td,
tbody th {
  border-bottom: 1px solid var(--line);
}
.frozen {
  border-right: 1px solid var(--line);
}
.total > * {
  height: 62px;
}
.total th {
  font-size: 17px;
  font-weight: 400;
  color: var(--grey);
}
.mark {
  display: block;
  width: 3px;
  height: 49px;
  border-radius: 0 3px 3px 0;
  background: var(--mobile);
}
.mark.web { background: var(--web); }
.mark.tablet { background: var(--tablet); }
.num {
  text-align: right;
}
.total .num {
  padding-top: 2px;
}
.num strong,
.num small {
  display: block;
  line-height: 24px;
}
.num strong {
  font-size: 15px;
  font-weight: 500;
}
.num small {
  font-size: 14px;
  color: #70757a;
}
.data > * {
  height: 40px;
}
.data th {
  font-weight: 500;
}
.shaded {
  background: #f8f9fb;
}
.index {
  padding-right: 36px;
  text-align: right;
}
.frozen div {
  display: flex;
  align-items: center;
  gap: 6px;
}
.frozen .mark {
  height: 31px;
}
.scroll-thumb {
  position: absolute;
  top: 0;
  right: 0;
  width: 2px;
  height: 617px;
  background: #c6c8cc;
}
.bottom-fade {
  position: absolute;
  z-index: 2;
  right: 0;
  bottom: 0;
  left: 0;
  height: 50px;
  background: linear-gradient(rgba(0, 0, 0, 0), rgba(0, 0, 0, 0.09));
  pointer-events: none;
}
</style>
